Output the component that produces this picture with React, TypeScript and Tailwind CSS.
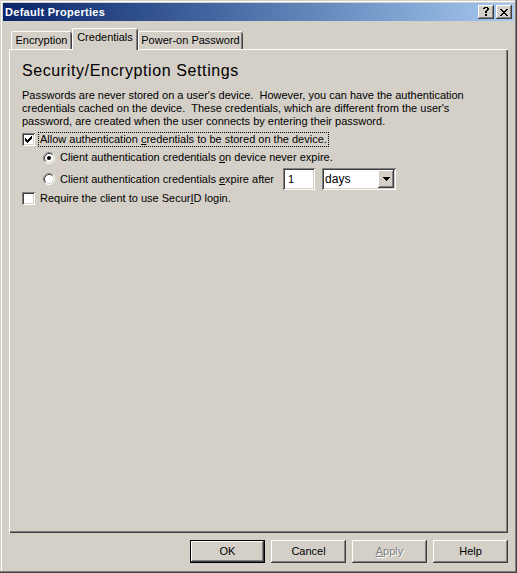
import React from 'react';

/* ------------------------------------------------------------------ */
/*  Win2k style pixel glyphs                                           */
/* ------------------------------------------------------------------ */

function Pix({ rows, color = '#000', className = '' }: { rows: string[]; color?: string; className?: string }) {
  const w = rows[0].length;
  const h = rows.length;
  const rects: React.ReactNode[] = [];
  rows.forEach((r, y) =>
    r.split('').forEach((c, x) => {
      if (c === 'X') rects.push(<rect key={`${x}-${y}`} x={x} y={y} width={1} height={1} fill={color} />);
    }),
  );
  return (
    <svg width={w} height={h} viewBox={`0 0 ${w} ${h}`} shapeRendering="crispEdges" className={className}>
      {rects}
    </svg>
  );
}

const CLOSE_GLYPH = ['XX....XX', '.XX..XX.', '..XXXX..', '...XX...', '..XXXX..', '.XX..XX.', 'XX....XX'];
const HELP_GLYPH = ['.XXXX.', 'XX..XX', '....XX', '...XX.', '..XX..', '..XX..', '......', '..XX..', '..XX..'];
const CHECK_GLYPH = ['......X', '.....XX', 'X...XXX', 'XX.XXX.', 'XXXXX..', '.XXX...', '..X....'];
const ARROW_GLYPH = ['XXXXXXX', '.XXXXX.', '..XXX..', '...X...'];

const RAISED =
  'shadow-[inset_-1px_-1px_#404040,inset_1px_1px_#ffffff,inset_-2px_-2px_#808080,inset_2px_2px_#d4d0c8]';
const SUNKEN =
  'shadow-[inset_1px_1px_#808080,inset_-1px_-1px_#ffffff,inset_2px_2px_#404040,inset_-2px_-2px_#d4d0c8]';

function Checkbox({ checked }: { checked: boolean }) {
  return (
    <span className={`flex items-center justify-center w-[13px] h-[13px] shrink-0 bg-white ${SUNKEN}`}>
      {checked && <Pix rows={CHECK_GLYPH} />}
    </span>
  );
}

function Radio({ checked }: { checked: boolean }) {
  return (
    <svg width={12} height={12} viewBox="0 0 12 12" className="shrink-0">
      <circle cx={6} cy={6} r={5} fill="#fff" />
      <path d="M2.11 9.89 A5.5 5.5 0 0 1 9.89 2.11" fill="none" stroke="#808080" />
      <path d="M9.89 2.11 A5.5 5.5 0 0 1 2.11 9.89" fill="none" stroke="#ffffff" />
      <path d="M2.82 9.18 A4.5 4.5 0 0 1 9.18 2.82" fill="none" stroke="#404040" />
      <path d="M9.18 2.82 A4.5 4.5 0 0 1 2.82 9.18" fill="none" stroke="#d4d0c8" />
      {checked && <circle cx={6} cy={6} r={2} fill="#000" />}
    </svg>
  );
}

function Button({ label, def, disabled }: { label: React.ReactNode; def?: boolean; disabled?: boolean }) {
  return (
    <div
      className={[
        'flex items-center justify-center w-[75px] h-[23px] bg-[#d4d0c8]',
        def
          ? 'shadow-[inset_0_0_0_1px_#000000,inset_-2px_-2px_#404040,inset_2px_2px_#ffffff,inset_-3px_-3px_#808080]'
          : RAISED,
        disabled ? 'text-[#808080] [text-shadow:1px_1px_#ffffff]' : 'text-black',
      ].join(' ')}
    >
      {label}
    </div>
  );
}

/* ------------------------------------------------------------------ */
/*  Component                                                          */
/* ------------------------------------------------------------------ */

export default function App() {
  return (
    <div
      className="w-[517px] h-[573px] flex flex-col p-[3px] bg-[#d4d0c8] text-[11px] leading-[13px] text-black shadow-[inset_-1px_-1px_#404040,inset_-2px_-2px_#808080,inset_1px_1px_#d4d0c8,inset_2px_2px_#ffffff]"
      style={{ fontFamily: '"Liberation Sans", Arial, sans-serif' }}
    >
      {/* Title bar */}
      <div className="flex items-center h-[18px] pl-[2px] pr-[2px] bg-linear-to-r from-[#0a246a] to-[#a6caf0]">
        <span className="flex-1 font-bold text-white tracking-[0.3px]">Default Properties</span>
        <div className={`flex items-center justify-center w-[16px] h-[14px] bg-[#d4d0c8] ${RAISED}`}>
          <Pix rows={HELP_GLYPH} className="mb-[1px]" />
        </div>
        <div className={`flex items-center justify-center w-[16px] h-[14px] ml-[2px] bg-[#d4d0c8] ${RAISED}`}>
          <Pix rows={CLOSE_GLYPH} />
        </div>
      </div>

      <div className="flex flex-col flex-1 px-[6px]">
        {/* Tabs */}
        <div className="flex items-end h-[28px] pl-[2px]">
          <div className="flex items-center justify-center w-[61px] h-[18px] pt-[1px] rounded-t-[2px] shadow-[inset_1px_0_#ffffff,inset_0_1px_#ffffff,inset_-1px_0_#404040,inset_-2px_0_#808080]">
            Encryption
          </div>
          <div className="relative z-10 flex items-start justify-center pt-[3px] w-[66px] h-[22px] -mb-[1px] bg-[#d4d0c8] rounded-t-[2px] shadow-[inset_1px_0_#ffffff,inset_0_1px_#ffffff,inset_-1px_0_#404040,inset_-2px_0_#808080]">
            Credentials
          </div>
          <div className="flex items-center justify-center w-[105px] h-[18px] pt-[1px] rounded-t-[2px] shadow-[inset_1px_0_#ffffff,inset_0_1px_#ffffff,inset_-1px_0_#404040,inset_-2px_0_#808080]">
            Power-on Password
          </div>
        </div>

        {/* Panel */}
        <div className="flex flex-col flex-1 pl-[13px] pt-[13px] shadow-[inset_1px_1px_#ffffff,inset_-1px_-1px_#404040,inset_-2px_-2px_#808080]">
          <div className="text-[16px] leading-[18px] tracking-[0.6px]">Security/Encryption Settings</div>
          <p className="mt-[9px] w-[460px]">
            Passwords are never stored on a user's device.&nbsp; However, you can have the authentication
            credentials cached on the device.&nbsp; These credentials, which are different from the user's
            password, are created when the user connects by entering their password.
          </p>

          <div className="flex items-center h-[15px] mt-[4px]">
            <Checkbox checked />
            <span className="ml-[3px] px-[1px] h-[15px] leading-[13px] border border-dotted border-black">
              Allow authentication <u>c</u>redentials to be stored on the device.
            </span>
          </div>

          <div className="flex items-center h-[15px] mt-[3px] ml-[21px]">
            <Radio checked />
            <span className="ml-[5px]">
              Client authentication credentials <u>o</u>n device never expire.
            </span>
          </div>

          <div className="flex items-center h-[22px] mt-[3px] ml-[21px]">
            <Radio checked={false} />
            <span className="ml-[5px]">
              Client authentication credentials <u>e</u>xpire after
            </span>
            <div className={`flex items-center w-[32px] h-[22px] ml-[9px] pl-[5px] bg-white ${SUNKEN}`}>1</div>
            <div className={`flex items-center w-[74px] h-[22px] ml-[7px] pl-[3px] pr-[2px] bg-white ${SUNKEN}`}>
              <span className="flex-1 text-[12px]">days</span>
              <div className={`flex items-center justify-center w-[16px] h-[18px] bg-[#d4d0c8] ${RAISED}`}>
                <Pix rows={ARROW_GLYPH} />
              </div>
            </div>
          </div>

          <div className="flex items-center h-[15px] mt-[1px]">
            <Checkbox checked={false} />
            <span className="ml-[5px]">
              Require the client to use Secur<u>I</u>D login.
            </span>
          </div>
        </div>

        {/* Buttons */}
        <div className="flex justify-end gap-[6px] pt-[7px] pb-[7px]">
          <Button label="OK" def />
          <Button label="Cancel" />
          <Button
            label={
              <>
                <u>A</u>pply
              </>
            }
            disabled
          />
          <Button label="Help" />
        </div>
      </div>
    </div>
  );
}
